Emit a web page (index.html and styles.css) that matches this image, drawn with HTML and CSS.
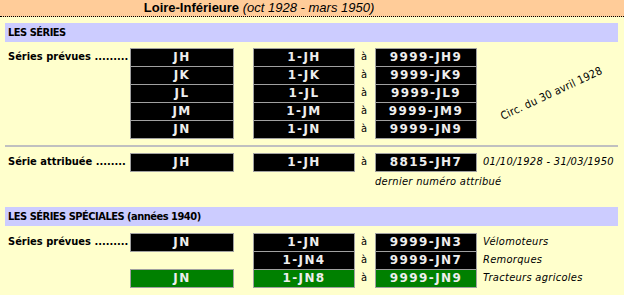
FILE: index.html
```html
<!DOCTYPE html>
<html lang="fr">
<head>
<meta charset="utf-8">
<title>Loire-Inférieure</title>
<link rel="stylesheet" href="styles.css">
</head>
<body>
<header class="head">
  <h1 class="title"><b>Loire-Inférieure</b> <i>(oct 1928 - mars 1950)</i></h1>
</header>
<main class="content">
  <div class="bar">LES SÉRIES</div>

  <div class="grid g1">
    <div class="label r1">Séries prévues .........</div>
    <div class="box c1 r1">JH</div><div class="box c2 r1">1-JH</div><div class="a r1">à</div><div class="box c3 r1">9999-JH9</div>
    <div class="box c1 r2">JK</div><div class="box c2 r2">1-JK</div><div class="a r2">à</div><div class="box c3 r2">9999-JK9</div>
    <div class="box c1 r3">JL</div><div class="box c2 r3">1-JL</div><div class="a r3">à</div><div class="box c3 r3">9999-JL9</div>
    <div class="box c1 r4">JM</div><div class="box c2 r4">1-JM</div><div class="a r4">à</div><div class="box c3 r4">9999-JM9</div>
    <div class="box c1 r5">JN</div><div class="box c2 r5">1-JN</div><div class="a r5">à</div><div class="box c3 r5">9999-JN9</div>
    <div class="circ"><span>Circ. du 30 avril 1928</span></div>
  </div>

  <hr class="sep">

  <div class="grid g2">
    <div class="label r1">Série attribuée ........</div>
    <div class="box c1 r1">JH</div><div class="box c2 r1">1-JH</div><div class="a r1">à</div><div class="box c3 r1">8815-JH7</div>
    <div class="note r1">01/10/1928 - 31/03/1950</div>
    <div class="sub">dernier numéro attribué</div>
  </div>

  <div class="bar bar2">LES SÉRIES SPÉCIALES (années 1940)</div>

  <div class="grid g3">
    <div class="label r1">Séries prévues .........</div>
    <div class="box c1 r1">JN</div><div class="box c2 r1">1-JN</div><div class="a r1">à</div><div class="box c3 r1">9999-JN3</div><div class="note r1">Vélomoteurs</div>
    <div class="box c2 r2">1-JN4</div><div class="a r2">à</div><div class="box c3 r2">9999-JN7</div><div class="note r2">Remorques</div>
    <div class="box green c1 r3">JN</div><div class="box green c2 r3">1-JN8</div><div class="a r3">à</div><div class="box green c3 r3">9999-JN9</div><div class="note r3">Tracteurs agricoles</div>
  </div>
</main>
</body>
</html>
```
FILE: styles.css
```css
* { box-sizing: border-box; }
html, body { margin: 0; padding: 0; }
body {
  background: #ffffcc;
  font-family: "DejaVu Sans Condensed", "DejaVu Sans", sans-serif;
  font-size: 11px;
  color: #000;
  width: 624px;
  height: 295px;
  overflow: hidden;
}
.head {
  background: #ffcc99;
  height: 17px;
  border-bottom: 1px dotted #000;
  text-align: center;
  padding-right: 106px;
}
.title {
  margin: 0;
  font-family: "Liberation Sans", Arial, sans-serif;
  font-size: 13px;
  line-height: 16px;
  font-weight: normal;
}
.title b { font-weight: bold; }
.title i { font-style: italic; }
.content { padding: 6px 6px 0 5px; }
.bar {
  background: #ccccff;
  height: 19px;
  line-height: 19px;
  padding-left: 3px;
  font-weight: bold;
  letter-spacing: -0.5px;
}
.grid {
  display: grid;
  grid-template-columns: 125px 104px 19px 102px 20px 102px 1fr;
  grid-auto-rows: 18px;
}
.g1 { margin-top: 6px; }
.g2 { margin-top: 6px; grid-template-rows: 18px 18px; }
.g3 { margin-top: 7px; }
.r1 { grid-row: 1; }
.r2 { grid-row: 2; }
.r3 { grid-row: 3; }
.r4 { grid-row: 4; }
.r5 { grid-row: 5; }
.label {
  grid-column: 1;
  padding-left: 3px;
  font-weight: bold;
  line-height: 18px;
  white-space: nowrap;
}
.box {
  height: 19px;
  background: #000;
  border: 1px solid #a0a0a0;
  color: #eeeeee;
  font-family: "DejaVu Sans", sans-serif;
  font-weight: bold;
  font-size: 12px;
  line-height: 17px;
  text-align: center;
  letter-spacing: 1.4px;
}
.box.green { background: #008000; }
.c1 { grid-column: 2; }
.c2 { grid-column: 4; }
.c3 { grid-column: 6; }
.a {
  grid-column: 5;
  padding-left: 6px;
  line-height: 18px;
}
.note {
  grid-column: 7;
  padding-left: 6px;
  font-style: italic;
  line-height: 18px;
  white-space: nowrap;
  letter-spacing: 0.3px;
}
.sub {
  grid-column: 6 / 8;
  grid-row: 2;
  font-style: italic;
  line-height: 18px;
  padding-top: 2px;
  letter-spacing: 0.3px;
}
.circ {
  grid-column: 7;
  grid-row: 1 / 6;
  display: flex;
  align-items: center;
  justify-content: center;
}
.circ span {
  display: block;
  transform: rotate(-25deg);
  white-space: nowrap;
  margin-left: 8px;
  letter-spacing: 0.2px;
}
.sep {
  margin: 7px 0 0 0;
  border: 0;
  height: 2px;
  background: #c0c0c0;
}
.bar2 { margin-top: 18px; }
```
